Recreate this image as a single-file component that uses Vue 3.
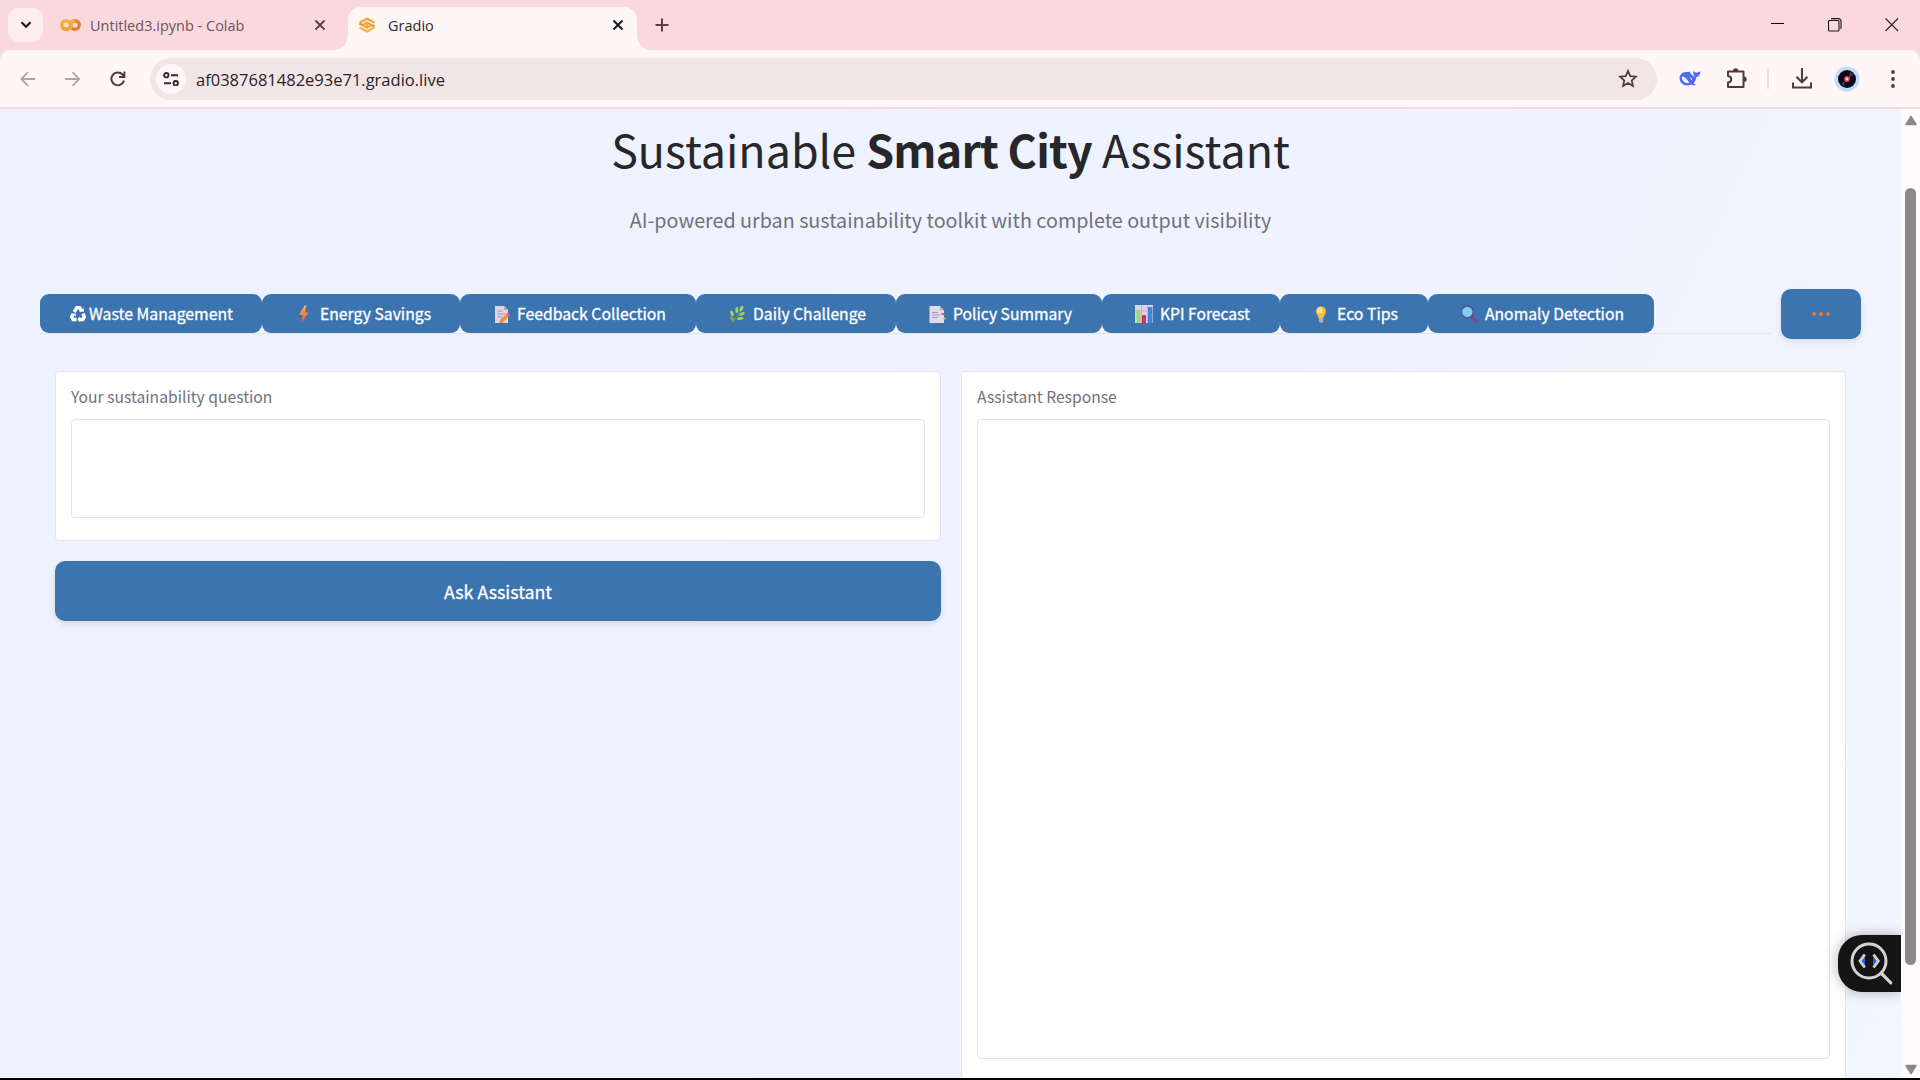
<script setup>
const tabs = [
  { icon: 'recycle', label: 'Waste Management', w: 222, iw: 16, pad: 30, gap: 3, tw: 144 },
  { icon: 'bolt', label: 'Energy Savings', w: 198, iw: 22, pad: 31, gap: 5, tw: 111 },
  { icon: 'memo', label: 'Feedback Collection', w: 236, iw: 18, pad: 33, gap: 6, tw: 149 },
  { icon: 'herb', label: 'Daily Challenge', w: 200, iw: 18, pad: 32, gap: 7, tw: 113 },
  { icon: 'page', label: 'Policy Summary', w: 206, iw: 18, pad: 32, gap: 7, tw: 119 },
  { icon: 'chart', label: 'KPI Forecast', w: 178, iw: 18, pad: 33, gap: 7, tw: 90 },
  { icon: 'bulb', label: 'Eco Tips', w: 148, iw: 18, pad: 33, gap: 6, tw: 61 },
  { icon: 'search', label: 'Anomaly Detection', w: 226, iw: 18, pad: 32, gap: 7, tw: 139 },
]
</script>

<template>
  <div class="window">
    <header class="strip">
      <button class="tabsearch"><svg width="12" height="8" viewBox="0 0 12 8"><path d="M1.500 1.200L6 5.700l4.500-4.500" fill="none" stroke="#1f1a1c" stroke-width="2.200" /></svg></button>
      <div class="btab idle">
        <svg width="21" height="14" viewBox="0 0 21 14" fill="none" stroke-width="3.400"><circle cx="6" cy="7" r="4.300" stroke="#f0b03c" /><path d="M9.200 10.200A4.300 4.300 0 0 1 2.800 10" stroke="#f0a03a" /><circle cx="15" cy="7" r="4.300" stroke="#e2803a" /><path d="M12 10A4.300 4.300 0 0 1 15 2.700" stroke="#f0b03c" /></svg>
        <span class="t1">Untitled3.ipynb - Colab</span>
        <svg class="x" width="12" height="12" viewBox="0 0 12 12"><path d="M1.500 1.500l9 9M10.500 1.500l-9 9" stroke="#5a3f45" stroke-width="1.800" /></svg>
      </div>
      <div class="btab active">
        <svg width="18" height="18" viewBox="0 0 18 18" fill="none" stroke-linejoin="round"><path d="M1.500 6.800L9 2.600l7.500 4.200" stroke="#f3ab3a" stroke-width="2.400" /><path d="M1.500 11.200L9 15.400l7.500-4.200" stroke="#f5b93c" stroke-width="2.400" /><path d="M1.500 7.500L5 9.300M16.500 10.500L13 8.700" stroke="#ef8a36" stroke-width="2.200" /><path d="M4.800 9L9 6.300 13.200 9 9 11.700z" stroke="#f0953a" stroke-width="1.700" /><circle cx="9" cy="9" r="1.500" fill="#f2a93c" /></svg>
        <span class="t2">Gradio</span>
        <svg class="x" width="12" height="12" viewBox="0 0 12 12"><path d="M1.500 1.500l9 9M10.500 1.500l-9 9" stroke="#1f1a1c" stroke-width="2" /></svg>
      </div>
      <svg class="plus" width="14" height="14" viewBox="0 0 14 14"><path d="M7 .5v13M.5 7h13" stroke="#5a3f45" stroke-width="2" /></svg>
      <div class="winctl">
        <svg width="14" height="14" viewBox="0 0 14 14"><path d="M0 5.500h13" stroke="#000" /></svg>
        <svg width="14" height="14" viewBox="0 0 14 14" fill="none" stroke="#1a1516" stroke-width="1.100"><rect x=".5" y="2.500" width="10.500" height="10.500" rx="1" /><path d="M3 .6h7.500a2.500 2.500 0 0 1 2.500 2.500V11" /></svg>
        <svg width="14" height="14" viewBox="0 0 14 14"><path d="M.5.5l12.500 12.500M13 .5L.5 13" stroke="#2b2022" stroke-width="1.100" /></svg>
      </div>
    </header>

    <div class="toolbar">
      <svg class="nav" width="16" height="16" viewBox="0 0 16 16" fill="none" stroke="#b3a2a6" stroke-width="1.800"><path d="M15 8H1.500M8 1.200L1.300 8 8 14.800" /></svg>
      <svg class="nav" width="16" height="16" viewBox="0 0 16 16" fill="none" stroke="#b3a2a6" stroke-width="1.800"><path d="M0 8h14M7.500 1.200L14.200 8l-6.700 6.800" /></svg>
      <svg class="nav" width="16" height="16" viewBox="0 0 16 16" fill="none" stroke="#55393f" stroke-width="2"><path d="M14 9.500A6.400 6.400 0 1 1 12.500 3.500L14.300 5.500M14.400.6V6H9" /></svg>
      <div class="omni">
        <span class="site"><svg width="16" height="14" viewBox="0 0 16 14" fill="none" stroke="#33292c" stroke-width="1.900"><circle cx="3.300" cy="3.200" r="2.200" /><path d="M8 3.200h7M1 11.200h7" /><circle cx="12.700" cy="11.200" r="2.200" /></svg></span>
        <span class="url">af0387681482e93e71.gradio.live</span>
        <svg class="star" width="20" height="19" viewBox="0 0 20 19"><path d="M10 1.900l2.300 5.300 5.700.5-4.300 3.800 1.300 5.600-5-3-5 3 1.300-5.600L2 7.700l5.700-.5z" fill="none" stroke="#4f3a3f" stroke-width="1.700" /></svg>
      </div>
      <svg class="whale" width="22" height="17" viewBox="0 0 22 17"><path d="M.5 7.500C1 4 4 1.800 7.500 1.900c2 .1 2.500.4 3.700-.3C10.800 3.400 12 4 13.500 5.200c1.200.9 1.500 1.800 2.500 1.800C14.500 5.500 14 3.300 14.500 1c1 .8 1.700 1.700 3 1.700C18.700 2.700 19.500 1.800 21.300 1.500c.2 2.800-1.300 4.800-4.100 5.800-.2 2.700-1.300 4.700-2.700 5.900.7.900 1.700 1.200 2.500 1.900-2 .8-3.500.2-4.700-.6C6.500 17.600.1 13.500.5 7.500z" fill="#4d6bf5" /><path d="M2.800 6.800c3.200-.5 5 2.200 7.400 5.900-3.800 1.300-7.600-1.400-7.400-5.900z" fill="#fff6f7" /><path d="M10.800 7.300l2.400 1.200-.4 1.700z" fill="#fff6f7" /></svg>
      <svg class="puzzle" width="21" height="21" viewBox="0 0 21 21"><path d="M2 3.500h15.500v15.500H2v-4.400c4.300-.4 4.300-6.300 0-6.700z" fill="none" stroke="#55393f" stroke-width="2" stroke-linejoin="round" /><path d="M7 3a2.700 2.700 0 0 1 5.400 0zM18 8.500a2.700 2.700 0 0 1 0 5.400z" fill="#55393f" /></svg>
      <span class="sep"></span>
      <svg class="dl" width="20" height="21" viewBox="0 0 20 21" fill="none" stroke="#55393f" stroke-width="2.100"><path d="M10 0v14M4.500 8.800L10 14.300l5.500-5.500M1 14.500v5h18v-5" /></svg>
      <svg class="avatar" width="26" height="26" viewBox="0 0 26 26"><circle cx="13" cy="13" r="12.500" fill="#c2dbf7" /><circle cx="13" cy="13" r="9" fill="#0b0718" /><path d="M16 5.500l4 3-5 3zM7 18l4-3-1 5z" fill="#3d3a4c" /><circle cx="13" cy="13" r="2.900" fill="#d8416b" /><circle cx="13" cy="13" r="1.400" fill="#ffd9a8" /></svg>
      <svg class="dots" width="4" height="18" viewBox="0 0 4 18" fill="#55393f"><circle cx="2" cy="2" r="1.900" /><circle cx="2" cy="9" r="1.900" /><circle cx="2" cy="16" r="1.900" /></svg>
    </div>

    <div class="view">
      <main class="page">
        <h1>Sustainable <b>Smart City</b> Assistant</h1>
        <p class="sub">AI-powered urban sustainability toolkit with complete output visibility</p>

        <div class="tabrow">
          <nav class="tabs">
            <button v-for="t in tabs" :key="t.label" :style="{ width: t.w + 'px', paddingLeft: t.pad + 'px', gap: t.gap + 'px' }">
              <svg :width="t.iw" height="18" :viewBox="`0 0 ${t.iw} 18`">
                <g v-if="t.icon === 'recycle'" fill="none" stroke="#fff" stroke-width="3.400"><path d="M4.200 7L6.800 2.800h3l1.700 3" /><path d="M13 8.500l1.300 3.200-1.500 2.800H9" /><path d="M6.600 14.500H3.200L1.700 11.700 3 9.200" /><path d="M9 6.700h4.800V3zM9.500 11.300v6L7.500 14.500zM1 8.300l4.500.2.500 3z" fill="#fff" stroke="none" /></g>
                <g v-else-if="t.icon === 'bolt'"><defs><linearGradient id="bz" x1="0" y1="0" x2="0" y2="1"><stop offset="0" stop-color="#f9b04b" /><stop offset="1" stop-color="#ea5548" /></linearGradient></defs><path d="M11.500.5L6 10h3.600L8.600 17.500 15.500 7.500h-3.700L13.500.5z" fill="url(#bz)" /></g>
                <g v-else-if="t.icon === 'memo'"><path d="M2 1h9l4 4v13H2z" fill="#ded5e8" /><path d="M11 1v4h4z" fill="#b5a5c8" /><path d="M4.500 6h5M4.500 9h8M4.500 12h5" stroke="#a293b5" stroke-width="1.100" /><path d="M15 7.800l2.300 2.200-8 7.900-3 .1.500-3z" fill="#f78a3c" /><path d="M15 7.800l2.300 2.200-1.300 1.300-2.300-2.200z" fill="#d5566c" /></g>
                <g v-else-if="t.icon === 'herb'" fill="#a4d65e"><path d="M4 17.500C7 14 10 12 14 3" fill="none" stroke="#6c9e41" stroke-width="1.300" /><ellipse cx="13.500" cy="3.500" rx="1.600" ry="2.900" transform="rotate(25 13.500 3.500)" /><ellipse cx="8.800" cy="5" rx="1.500" ry="3" /><ellipse cx="4" cy="8.300" rx="1.500" ry="3" transform="rotate(-25 4 8.300)" /><ellipse cx="14" cy="9" rx="2.900" ry="1.500" transform="rotate(-25 14 9)" /><ellipse cx="12.300" cy="13.500" rx="3.200" ry="1.400" transform="rotate(-8 12.300 13.500)" /><ellipse cx="4" cy="13.500" rx="1.300" ry="2.700" transform="rotate(-35 4 13.500)" fill="#7eb545" /></g>
                <g v-else-if="t.icon === 'page'"><path d="M1.500 1h10.500l4 4.500V18H1.500z" fill="#e2dbeb" /><path d="M12 1v4.500h4z" fill="#b7a9c8" /><path d="M4 7.500h6M4 10h8M4 12.500h6" stroke="#a395b6" stroke-width="1.100" /><path d="M13.500 8h3v2h-3z" fill="#d8536e" /><path d="M15.500 12.500h2V14.500h-2z" fill="#f5b347" /></g>
                <g v-else-if="t.icon === 'chart'"><rect width="18" height="18" fill="#ddd3e5" /><path d="M0 6h18M0 12h18M6.500 0v18M12.500 0v18" stroke="#b9a9c8" stroke-width=".8" /><path d="M1.500 5H5.500V18h-4z" fill="#9cdb72" /><path d="M7 10h4v8H7z" fill="#d52f61" /><path d="M13 2h4.500v16H13z" fill="#3f86db" /></g>
                <g v-else-if="t.icon === 'bulb'"><path d="M8 1.200a5 5 0 0 0-5 5.200c0 3 2.500 4 2.700 7.100h4.600c.2-3.100 2.700-4.100 2.700-7.100A5 5 0 0 0 8 1.200z" fill="#fcbf43" /><ellipse cx="7" cy="5.500" rx="2.300" ry="3" fill="#ffe596" /><path d="M5.800 13.500h4.400v2.800L9 17.800H7l-1.200-1.500z" fill="#b9a9bd" /></g>
                <g v-else><path d="M11.500 11.500l4.500 5" stroke="#86447e" stroke-width="3" stroke-linecap="round" /><circle cx="7.300" cy="6.900" r="5.900" fill="#83cbe9" stroke="#4a5391" stroke-width="1.300" /></g>
              </svg>
              <svg class="lbl" :width="t.tw" height="24"><text x="0" y="18" :textLength="t.tw" lengthAdjust="spacingAndGlyphs">{{ t.label }}</text></svg>
            </button>
          </nav>
          <button class="more"><i></i><i></i><i></i></button>
        </div>

        <div class="cols">
          <section class="col">
            <div class="card ask">
              <label>Your sustainability question</label>
              <div class="field"></div>
            </div>
            <button class="go">Ask Assistant</button>
          </section>
          <section class="card resp">
            <label>Assistant Response</label>
            <div class="field"></div>
          </section>
        </div>
      </main>
      <aside class="scroll">
        <svg width="12" height="11" viewBox="0 0 12 11"><path d="M6 1.500L11 9.500H1z" fill="#8b8889" stroke="#8b8889" stroke-width="1.500" stroke-linejoin="round" /></svg>
        <div class="thumb"></div>
        <svg class="down" width="12" height="11" viewBox="0 0 12 11"><path d="M6 9.500L11 1.500H1z" fill="#8b8889" stroke="#8b8889" stroke-width="1.500" stroke-linejoin="round" /></svg>
      </aside>
      <div class="float">
        <svg width="44" height="44" viewBox="0 0 44 44" fill="none" stroke="#d6d1d2" stroke-linecap="round"><circle cx="19" cy="19" r="17" stroke-width="3" /><path d="M31.500 31.500l9.300 9.300" stroke-width="3.200" /><path d="M15 14.500v9L10.500 19zM23 14.500v9l4.500-4.500z" fill="#2957f0" stroke="none" /><path d="M14.800 12.500L10 19l4.800 6.500M23.500 12.500l4.800 6.500-4.800 6.500" stroke-width="2.800" stroke-linecap="butt" /></svg>
      </div>
    </div>
  </div>
</template>

<style>
body { margin: 0; overflow: hidden; }
</style>
<style scoped>
* { box-sizing: border-box; }
svg { display: block; flex: none; }
button { border: 0; margin: 0; padding: 0; font: inherit; }
.window { width: 1920px; height: 1080px; display: flex; flex-direction: column; background: #fad9de; border-bottom: 2px solid #000; font-family: "Noto Sans CJK SC", "Noto Sans", sans-serif; overflow: hidden; }
.strip { height: 50px; flex: none; display: flex; align-items: flex-start; font-family: "Open Sans", "Noto Sans", sans-serif; }
.tabsearch { width: 35px; height: 34px; margin: 8px 0 0 8px; border-radius: 11px; background: #ffedf0; display: flex; align-items: center; justify-content: center; }
.btab { display: flex; align-items: center; position: relative; white-space: nowrap; }
.idle { width: 305px; height: 50px; padding-left: 17px; }
.active { width: 289px; height: 43px; margin-top: 7px; padding: 0 0 7px 10px; border-radius: 13px 13px 0 0; background: #fff6f7; }
.active::before, .active::after { content: ""; position: absolute; bottom: 0; width: 14px; height: 14px; }
.active::before { left: -14px; background: radial-gradient(circle at 0 0, transparent 13.500px, #fff6f7 14px); }
.active::after { right: -14px; background: radial-gradient(circle at 100% 0, transparent 13.500px, #fff6f7 14px); }
.t1 { margin-left: 9px; font-size: 14.500px; color: #6a545a; }
.t2 { margin-left: 12px; font-size: 14.500px; color: #2f292b; }
.idle .x { margin-left: auto; margin-right: 22px; }
.active .x { margin-left: auto; margin-right: 13px; }
.plus { margin: 18px 0 0 18px; }
.winctl { margin: 18px 21px 0 auto; display: flex; gap: 43px; }
.toolbar { height: 59px; flex: none; display: flex; align-items: center; background: #fff6f7; border-bottom: 2px solid #f5dade; border-radius: 11px 11px 0 0; padding-left: 20px; }
.nav { margin-right: 29px; }
.nav:nth-child(3) { margin-right: 24px; }
.omni { width: 1507px; height: 42px; border-radius: 21px; background: #f1e5e8; display: flex; align-items: center; padding: 0 19px 0 6px; font-family: "Open Sans", "Noto Sans", sans-serif; }
.site { width: 30px; height: 30px; border-radius: 50%; background: #fff6f7; display: flex; align-items: center; justify-content: center; }
.url { margin: 1px 0 0 10px; font-size: 16.500px; color: #2a2427; white-space: nowrap; }
.star { margin-left: auto; }
.whale { margin-left: 22px; }
.puzzle { margin-left: 25px; }
.sep { width: 2px; height: 20px; background: #fad9de; margin: 0 23px 0 20px; }
.avatar { margin: 0 31px 0 22px; }
.view { flex: 1; display: flex; min-height: 0; position: relative; }
.page { width: 1901px; overflow: hidden; background: linear-gradient(115deg, #ecf2fe 0%, #eff2ff 45%, #f2f6ff 100%); }
h1 { margin: 0; height: 86px; padding-top: 5px; text-align: center; font-weight: 400; font-size: 44.800px; line-height: 70px; color: #27272a; white-space: nowrap; }
h1 b { font-weight: 600; letter-spacing: -.8px; }
.sub { margin: 0; height: 94px; padding-top: 8px; text-align: center; font-size: 19.730px; line-height: 34px; color: #71717a; white-space: nowrap; }
.tabrow { height: 50px; display: flex; margin: 0 40px; align-items: center; }
.tabs { width: 1731px; height: 40px; border-bottom: 1px solid #e4e4e9; display: flex; }
.tabs button { height: 39px; background: #3c74b0; border-radius: 9px; display: flex; align-items: center; }
.lbl { overflow: visible; }
.lbl text { font-size: 15.600px; font-weight: 400; fill: #fff; stroke: #fff; stroke-width: .3px; }
.more { margin-left: 10px; width: 80px; height: 50px; border-radius: 10px; background: #3c74b0; box-shadow: 0 3px 6px rgba(0, 0, 0, .1); display: flex; align-items: center; justify-content: center; gap: 3px; }
.more i { width: 4px; height: 4px; border-radius: 50%; background: #e47835; }
.cols { display: flex; gap: 20px; padding: 32px 55px 0; }
.col { width: 886px; }
.card { background: #fff; border: 1px solid #e4e4e9; border-radius: 4px; padding: 12px 15px 0; }
.ask { height: 170px; }
.resp { width: 885px; height: 730px; }
.card label { display: block; height: 35px; font-size: 15.670px; line-height: 26px; color: #71717a; white-space: nowrap; }
.field { border: 1px solid #e4e4e7; border-radius: 4px; height: 99px; background: #fefefe; }
.resp .field { height: 640px; }
.go { display: block; width: 100%; height: 60px; margin-top: 20px; border-radius: 10px; background: #3c74b0; color: #fff; font-size: 17.800px; -webkit-text-stroke: .3px #fff; line-height: 59px; text-align: center; box-shadow: 0 3px 6px rgba(0, 0, 0, .1); }
.scroll { width: 19px; background: #fffafb; display: flex; flex-direction: column; align-items: center; padding: 6px 0 3px; }
.thumb { width: 11px; height: 777px; margin-top: 62px; border-radius: 6px; background: #8b8889; }
.down { margin-top: auto; }
.float { position: absolute; right: 19px; top: 826px; width: 63px; height: 57px; border-radius: 24px 0 0 24px; background: #141414; box-shadow: 0 0 14px rgba(0, 0, 0, .3); clip-path: inset(-20px 0 -20px -20px); padding: 7px 0 0 12px; }
</style>
